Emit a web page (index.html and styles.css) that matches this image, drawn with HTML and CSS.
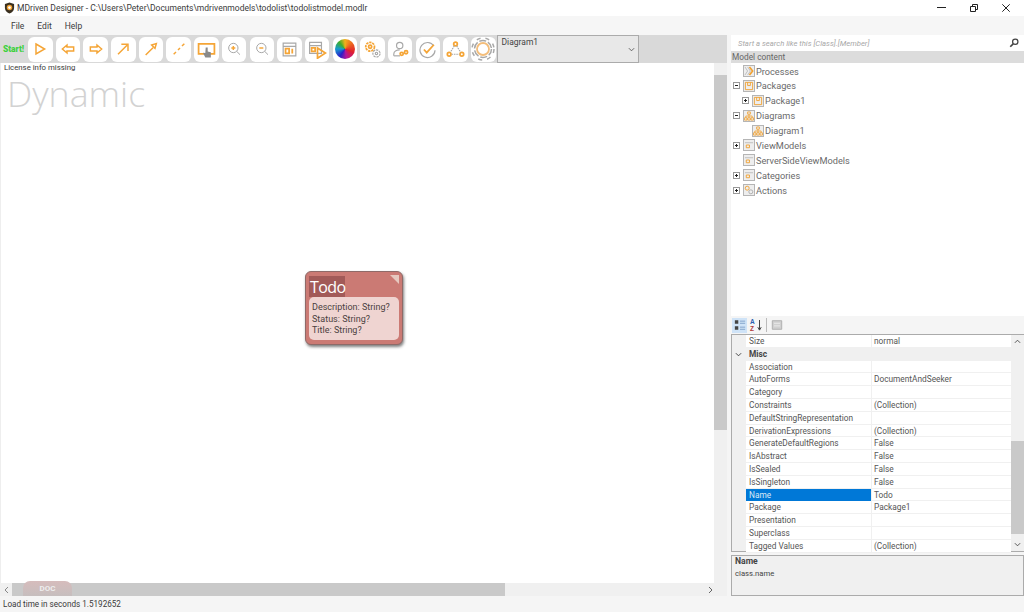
FILE: index.html
```html
<!DOCTYPE html>
<html lang="en">
<head>
<meta charset="utf-8">
<title>MDriven Designer</title>
<link rel="stylesheet" href="styles.css">
</head>
<body>
<div class="app">
  <header class="titlebar">
    <svg class="logo" viewBox="0 0 12 12"><path d="M1 1.5 6 0l5 1.500V6c0 3-2.500 5-5 6-2.500-1-5-3-5-6z" fill="#3a3020"/><circle cx="6" cy="5.500" r="3" fill="#f0a030"/><circle cx="6" cy="5.500" r="1.500" fill="#fff"/></svg>
    <span class="title">MDriven Designer - C:\Users\Peter\Documents\mdrivenmodels\todolist\todolistmodel.modlr</span>
    <div class="winctl">
      <svg class="w-min" viewBox="0 0 9 8"><path d="M0 3.500h9" stroke="#222" fill="none"/></svg>
      <svg class="w-max" viewBox="0 0 8 8"><path d="M.5 2.500h5v5h-5zM2.500 2.500v-2h5v5h-2" stroke="#222" fill="none"/></svg>
      <svg class="w-close" viewBox="0 0 8 8"><path d="M.3.300l7.400 7.400M7.700.300l-7.400 7.400" stroke="#222" fill="none"/></svg>
    </div>
  </header>
  <nav class="menubar"><span>File</span><span>Edit</span><span>Help</span></nav>
  <main class="workspace">
    <section class="designer">
      <div class="toolbar">
        <span class="start">Start!</span>
        <div class="tools">
          <button class="tool"><svg viewBox="0 0 24 24"><path d="M6 4.500 19 12 6 19.500z" class="o"/></svg></button>
          <button class="tool"><svg viewBox="0 0 24 24"><path d="M3.500 12l7-6v3h10v6h-10v3z" class="o"/></svg></button>
          <button class="tool"><svg viewBox="0 0 24 24"><path d="M20.500 12l-7-6v3h-10v6h10v3z" class="o"/></svg></button>
          <button class="tool"><svg viewBox="0 0 24 24"><path d="M4.500 20 18 6.500M9.500 5H19.500V15" class="o"/></svg></button>
          <button class="tool"><svg viewBox="0 0 24 24"><path d="M4 21 15 10M13 6l7-2-2 7z" class="o"/></svg></button>
          <button class="tool"><svg viewBox="0 0 24 24"><path d="M4 20l3.500-3.500M10.500 13.500l3-3M16.500 7.500 20 4" class="o"/></svg></button>
          <button class="tool wide"><svg viewBox="0 0 24 24"><path d="M2 5h20v12.500H2z" class="o"/><path d="M11 9.500h2.500v5l4 1v6.500h-7l-3-6 3 .5z" fill="#8a8a8a"/></svg></button>
          <button class="tool"><svg viewBox="0 0 24 24"><circle cx="11" cy="10.500" r="7" class="g"/><path d="M16 15.500l5 5" class="g"/><path d="M8 10.500h6M11 7.500v6" class="o"/></svg></button>
          <button class="tool"><svg viewBox="0 0 24 24"><circle cx="11" cy="10.500" r="7" class="g"/><path d="M16 15.500l5 5" class="g"/><path d="M8 10.500h6" class="o"/></svg></button>
          <button class="tool wide"><svg viewBox="0 0 24 24"><path d="M4 4h16v16H4zM4 8h16" class="g"/><path d="M7 11h4.500v6H7zM15.500 11v6" class="o"/></svg></button>
          <button class="tool wide"><svg viewBox="0 0 24 24"><path d="M2 3h15v14H2zM2 7h15" class="g"/><path d="M4.500 10h4.500v4.500H4.500z" class="o"/><path d="M12 10l10 6.500-10 6.500z" class="o"/></svg></button>
          <button class="tool full"><i class="wheel"></i></button>
          <button class="tool wide"><svg viewBox="0 0 24 24"><circle cx="9" cy="8.500" r="5.500" class="ow"/><circle cx="9" cy="8.500" r="2" class="o"/><circle cx="17" cy="17" r="4.500" class="gw"/><circle cx="17" cy="17" r="1.500" class="g"/></svg></button>
          <button class="tool wide"><svg viewBox="0 0 24 24"><circle cx="11" cy="7" r="4" class="g"/><path d="M3.500 20v-2c0-3.500 3.500-5.500 7.500-5.500" class="g"/><path d="M3.500 20h8" class="g"/><circle cx="13.500" cy="17.500" r="2" class="o"/><circle cx="19" cy="15.500" r="2" class="o"/></svg></button>
          <button class="tool wide"><svg viewBox="0 0 24 24"><path d="M20 7.500A9.500 9.500 0 1 0 21.500 13" class="g"/><path d="M7.500 12l3.500 4 9-10" class="o"/></svg></button>
          <button class="tool wide"><svg viewBox="0 0 24 24"><circle cx="12" cy="5" r="2.300" class="o"/><circle cx="4" cy="18" r="2.300" class="o"/><circle cx="20" cy="18" r="2.300" class="o"/><path d="M10.500 7.500 5.500 15.500M13.500 7.500 18.500 15.500M7 18h10" class="g" stroke-dasharray="2 1"/></svg></button>
          <button class="tool full"><svg viewBox="0 0 24 24"><circle cx="12" cy="12" r="6" class="ring"/><circle cx="12" cy="12" r="8.500" class="g" stroke-dasharray="7 2"/><circle cx="12" cy="12" r="11" class="g" stroke-dasharray="4 5"/></svg></button>
        </div>
        <div class="combo"><span>Diagram1</span><svg viewBox="0 0 8 5"><path d="M1 1l3 3 3-3" fill="none" stroke="#555"/></svg></div>
      </div>
      <div class="canvas-row">
        <div class="canvas">
          <p class="license">License info missing</p>
          <p class="watermark">Dynamic</p>
          <article class="node">
            <i class="fold"></i>
            <h2><span>Todo</span></h2>
            <ul>
              <li>Description: String?</li>
              <li>Status: String?</li>
              <li>Title: String?</li>
            </ul>
          </article>
        </div>
        <div class="vscroll"><i class="thumb"></i></div>
      </div>
      <div class="hscroll">
        <svg class="harrow" viewBox="0 0 5 8"><path d="M4 1 1 4l3 3" fill="none" stroke="#888"/></svg>
        <div class="hthumb"><span class="doc">DOC</span></div>
        <svg class="harrow end" viewBox="0 0 5 8"><path d="M1 1l3 3-3 3" fill="none" stroke="#666"/></svg>
      </div>
    </section>
    <aside class="side">
      <div class="search"><em>Start a search like this [Class].[Member]</em>
        <svg viewBox="0 0 12 12"><circle cx="7.500" cy="4.500" r="3.200" fill="none" stroke="#444" stroke-width="1.500"/><path d="M5 7 1.500 10.500" stroke="#444" stroke-width="2"/></svg>
      </div>
      <div class="content-head">Model content</div>
      <div class="tree">
        <div class="trow l0"><i class="exp none"></i><span class="ti"><svg viewBox="0 0 11 11"><path d="M1 1l3 4.500L1 10M4 1l3 4.500L4 10" fill="none" stroke="#bbb"/><path d="M6 1l3.500 4.500L6 10" fill="none" stroke="#f0a030" stroke-width="1.800"/></svg></span>Processes</div>
        <div class="trow l0"><i class="exp minus"></i><span class="ti"><svg viewBox="0 0 11 11"><path d="M1.500 1.500h8v8h-8zM4 1.500v3.500h3V1.500" fill="none" stroke="#f0a030"/></svg></span>Packages</div>
        <div class="trow l1"><i class="exp plus"></i><span class="ti"><svg viewBox="0 0 11 11"><path d="M1.500 1.500h8v8h-8zM4 1.500v3.500h3V1.500" fill="none" stroke="#f0a030"/></svg></span>Package1</div>
        <div class="trow l0"><i class="exp minus"></i><span class="ti"><svg viewBox="0 0 11 11"><path d="M4 1h3v2.500H4zM.5 7.500h2.800V10H.5zM4.100 7.500h2.800V10H4.100zM7.700 7.500h2.800V10H7.700zM2 7.500V5.500h7v2M5.500 3.500v4" fill="none" stroke="#f0a030" stroke-width=".9"/></svg></span>Diagrams</div>
        <div class="trow l1"><i class="exp none"></i><span class="ti"><svg viewBox="0 0 11 11"><path d="M4 1h3v2.500H4zM.5 7.500h2.800V10H.5zM4.100 7.500h2.800V10H4.100zM7.700 7.500h2.800V10H7.700zM2 7.500V5.500h7v2M5.500 3.500v4" fill="none" stroke="#f0a030" stroke-width=".9"/></svg></span>Diagram1</div>
        <div class="trow l0"><i class="exp plus"></i><span class="ti"><svg viewBox="0 0 11 11"><path d="M1 3h9" stroke="#bbb"/><path d="M2.500 5.500h3.500v3H2.500z" fill="none" stroke="#f0a030"/></svg></span>ViewModels</div>
        <div class="trow l0"><i class="exp none"></i><span class="ti"><svg viewBox="0 0 11 11"><path d="M1 3h9" stroke="#bbb"/><path d="M2.500 5.500h3.500v3H2.500z" fill="none" stroke="#f0a030"/></svg></span>ServerSideViewModels</div>
        <div class="trow l0"><i class="exp plus"></i><span class="ti"><svg viewBox="0 0 11 11"><path d="M1 3h9" stroke="#bbb"/><path d="M2.500 5.500h3.500v3H2.500z" fill="none" stroke="#f0a030"/></svg></span>Categories</div>
        <div class="trow l0"><i class="exp plus"></i><span class="ti"><svg viewBox="0 0 11 11"><circle cx="3.500" cy="3.500" r="2.200" fill="none" stroke="#f0a030"/><circle cx="7.500" cy="7.500" r="2.200" fill="none" stroke="#aaa"/></svg></span>Actions</div>
      </div>
      <div class="prop-tools">
        <span class="pt on"><svg viewBox="0 0 14 14"><path d="M1 1.500h4v4H1zM1 8.500h4v4H1z" fill="#444"/><path d="M7 2.500h6M7 5h6M7 9.500h6M7 12h6" stroke="#7a9cc4"/></svg></span>
        <span class="pt az"><b>A</b><b>Z</b><svg viewBox="0 0 5 13"><path d="M2.500 0v11M.5 8.500l2 3.500 2-3.500" fill="none" stroke="#222"/></svg></span>
        <i class="sep"></i>
        <span class="pt"><svg viewBox="0 0 14 14"><path d="M1.500 2h11v10h-11z" fill="#d0d0d0" stroke="#aaa"/><path d="M3.500 5h7M3.500 8h7" stroke="#eee"/></svg></span>
      </div>
      <div class="grid-wrap">
        <div class="pgrid">
          <div class="prow"><span class="pn">Size</span><span class="pv">normal</span></div>
          <div class="prow cat"><svg viewBox="0 0 8 5"><path d="M1 1l3 3 3-3" fill="none" stroke="#333"/></svg><span class="pn">Misc</span></div>
          <div class="prow"><span class="pn">Association</span><span class="pv"></span></div>
          <div class="prow"><span class="pn">AutoForms</span><span class="pv">DocumentAndSeeker</span></div>
          <div class="prow"><span class="pn">Category</span><span class="pv"></span></div>
          <div class="prow"><span class="pn">Constraints</span><span class="pv">(Collection)</span></div>
          <div class="prow"><span class="pn">DefaultStringRepresentation</span><span class="pv"></span></div>
          <div class="prow"><span class="pn">DerivationExpressions</span><span class="pv">(Collection)</span></div>
          <div class="prow"><span class="pn">GenerateDefaultRegions</span><span class="pv">False</span></div>
          <div class="prow"><span class="pn">IsAbstract</span><span class="pv">False</span></div>
          <div class="prow"><span class="pn">IsSealed</span><span class="pv">False</span></div>
          <div class="prow"><span class="pn">IsSingleton</span><span class="pv">False</span></div>
          <div class="prow sel"><span class="pn">Name</span><span class="pv">Todo</span></div>
          <div class="prow"><span class="pn">Package</span><span class="pv">Package1</span></div>
          <div class="prow"><span class="pn">Presentation</span><span class="pv"></span></div>
          <div class="prow"><span class="pn">Superclass</span><span class="pv"></span></div>
          <div class="prow"><span class="pn">Tagged Values</span><span class="pv">(Collection)</span></div>
        </div>
        <div class="gscroll">
          <svg viewBox="0 0 8 5"><path d="M1 4l3-3 3 3" fill="none" stroke="#444"/></svg>
          <i class="gthumb"></i>
          <svg viewBox="0 0 8 5"><path d="M1 1l3 3 3-3" fill="none" stroke="#444"/></svg>
        </div>
      </div>
      <div class="help"><strong>Name</strong><span>class.name</span></div>
    </aside>
  </main>
  <footer class="status">Load time in seconds 1.5192652</footer>
</div>
</body>
</html>
```
FILE: styles.css
```css
* { box-sizing: border-box; }
html, body { margin: 0; height: 100%; }
body { font-family: Roboto, "Open Sans", sans-serif; font-size: 8.300px; color: #333; background: #f5f5f5; overflow: hidden; }
.app { width: 1024px; height: 612px; display: flex; flex-direction: column; }

.titlebar { height: 16px; background: #fff; display: flex; align-items: center; padding-left: 4px; flex: none; }
.logo { width: 11px; height: 12px; margin-right: 2px; }
.title { font-size: 8.500px; color: #3a3a3a; white-space: nowrap; }
.winctl { margin-left: auto; display: flex; gap: 24px; padding-right: 14px; }
.winctl svg { height: 8px; display: block; }
.w-min { width: 9px; }
.w-max, .w-close { width: 8px; }

.menubar { height: 19px; background: #f6f6f6; display: flex; align-items: center; padding-left: 11px; gap: 13px; flex: none; font-size: 8.500px; color: #3a3a3a; }

.workspace { flex: 1; display: flex; min-height: 0; }
.designer { width: 727px; display: flex; flex-direction: column; flex: none; }
.toolbar { height: 28px; background: #d9d9d9; display: flex; align-items: center; flex: none; }
.start { width: 28px; padding-left: 3px; font-size: 8.400px; font-weight: 900; color: #3ed13e; white-space: nowrap; }
.tools { display: flex; gap: 3.200px; }
.tool { width: 24.500px; height: 25px; padding: 0; border: 0; border-radius: 6px; background: #fff; display: flex; align-items: center; justify-content: center; }
.tool svg { width: 16px; height: 16px; display: block; }
.tool.wide svg { width: 19px; height: 19px; }
.tool.full svg { width: 24px; height: 24px; }
.wheel { display: block; width: 20px; height: 20px; border-radius: 50%; background: conic-gradient(#f2b01c, #ea5a20 60deg, #e0202c 110deg, #b5169a 170deg, #2a1fc9 215deg, #159ad1 270deg, #3fae2a 320deg, #f2b01c); }
.o, .ow, .g, .gw, .ring { fill: none; }
.o, .ow { stroke: #f5a536; stroke-width: 2.200px; }
.ow { stroke-dasharray: 3 1; }
.g, .gw { stroke: #a8a8a8; stroke-width: 1.500px; }
.gw { stroke-dasharray: 3 1; }
.ring { stroke: #f3bd7a; stroke-width: 1.800px; }
.combo { width: 142px; height: 28px; margin-left: 1px; background: #e8e8e8; border: 1px solid #ababab; display: flex; justify-content: space-between; padding: 1px 3px 0 4px; font-size: 8.500px; color: #444; }
.combo svg { width: 7px; height: 5px; margin-top: 10px; }

.canvas-row { flex: 1; display: flex; min-height: 0; }
.canvas { flex: 1; background: #fff; position: relative; padding: 0 0 0 3px; border-left: 1px solid #eee; }
.license { margin: 0; font-size: 7.800px; line-height: 10px; color: #3a3a3a; }
.watermark { margin: 1px 0 0 3px; font-family: "Open Sans", sans-serif; font-size: 35.700px; line-height: 38px; font-weight: 300; color: #d2d2d2; }
.node { position: absolute; left: 304px; top: 208px; width: 98px; height: 74px; background: #cb7a74; border: 1px solid #8f6a68; border-radius: 6px; box-shadow: 1px 2px 3px rgba(60,60,60,.65); padding: 4px 3px 3px; }
.node h2 { margin: 0; font-family: "Open Sans", sans-serif; font-size: 16px; line-height: 23px; font-weight: 400; height: 21px; color: #fff; letter-spacing: -.6px; }
.node h2 span { display: inline-block; width: 36px; height: 21px; padding-left: 1px; background: #a25a58; }
.fold { position: absolute; right: 3px; top: 3px; width: 0; height: 0; border-top: 9px solid #e6c8bf; border-left: 9px solid transparent; }
.node ul { list-style: none; margin: 0; padding: 5px 3px 0; height: 43px; background: #efd4d1; border-radius: 5px; font-size: 9px; line-height: 11.700px; color: #4a3f3f; white-space: nowrap; }
.vscroll { width: 13px; background: #f0f0f0; flex: none; }
.thumb { display: block; margin-top: 12px; height: 355px; background: #c9c9c9; }
.hscroll { height: 13px; background: #f0f0f0; display: flex; align-items: center; flex: none; position: relative; }
.harrow { width: 5px; height: 8px; margin-left: 4px; flex: none; }
.harrow.end { margin-left: auto; margin-right: 14px; }
.hthumb { width: 493px; height: 13px; margin-left: 3px; background: #c9c9c9; }
.doc { position: absolute; left: 23px; top: -2px; width: 49px; height: 15px; border-radius: 7px 7px 0 0; background: linear-gradient(#d6bcbc, #c6bebe); color: #eee; font-weight: 700; font-size: 8px; text-align: center; line-height: 15px; }

.side { width: 293px; margin-left: 4px; display: flex; flex-direction: column; flex: none; }
.search { height: 16px; background: #fff; display: flex; align-items: center; justify-content: space-between; padding: 0 5px 0 7px; flex: none; }
.search em { font-size: 7.700px; color: #a8a8a8; }
.search svg { width: 10px; height: 10px; }
.content-head { height: 12px; background: #dcdcdc; padding-left: 1px; font-size: 8.300px; line-height: 12px; color: #666; flex: none; }
.tree { height: 253px; background: #fff; flex: none; padding-top: .6px; }
.trow { height: 14.900px; display: flex; align-items: center; font-size: 9.200px; color: #6a6a6a; white-space: nowrap; padding-left: 2px; }
.trow.l1 { padding-left: 11px; }
.exp { width: 7px; height: 7px; margin-right: 3px; border: 1px solid #999; background: #fff; position: relative; flex: none; }
.exp.none { border: 0; background: none; }
.exp.minus::before, .exp.plus::before { content: ""; position: absolute; left: 1px; top: 2px; width: 3px; height: 1px; background: #222; }
.exp.plus::after { content: ""; position: absolute; left: 2px; top: 1px; width: 1px; height: 3px; background: #222; }
.ti { width: 12px; height: 12px; margin-right: 1px; border: 1px solid #b5b5b5; background: #eee; display: flex; flex: none; }
.ti svg { width: 10px; height: 10px; display: block; }

.prop-tools { height: 18px; background: #f5f5f5; display: flex; align-items: center; padding-left: 1px; gap: 2px; flex: none; }
.pt { width: 15px; height: 15px; display: flex; align-items: center; justify-content: center; position: relative; }
.pt.on { background: #cfe3f7; }
.pt svg { width: 12px; height: 12px; }
.pt.az { font-family: "Liberation Sans", sans-serif; font-size: 6.500px; line-height: 7.500px; flex-direction: column; align-items: flex-start; padding-left: 1px; }
.pt.az b:first-child { color: #2a5fb0; }
.pt.az b:nth-child(2) { color: #b03a3a; }
.pt.az svg { position: absolute; right: 2px; top: 2px; width: 5px; height: 11px; }
.sep { width: 1px; height: 14px; background: #bbb; }

.grid-wrap { height: 218px; display: flex; flex: none; background: #f0f0f0; border-top: 1px solid #ababab; border-bottom: 1px solid #ababab; border-left: 1px solid #ababab; }
.pgrid { width: 279px; display: grid; grid-auto-rows: 12.800px; align-content: start; }
.prow { display: grid; grid-template-columns: 125px 140px; margin-left: 14px; background: #fff; border-bottom: 1px solid #f0f0f0; font-size: 8.300px; line-height: 12px; color: #555; white-space: nowrap; }
.pn { padding-left: 3px; }
.pv { border-left: 1px solid #f0f0f0; padding-left: 2px; }
.prow.cat { position: relative; background: #f0f0f0; display: block; }
.prow.cat svg { position: absolute; left: -11px; top: 4px; width: 7px; height: 5px; }
.prow.cat .pn { font-weight: 700; color: #444; }
.prow.sel .pn { background: #0078d7; color: #dce9f5; }
.gscroll { flex: 1; display: flex; flex-direction: column; align-items: center; padding: 4px 0; }
.gscroll svg { width: 7px; height: 5px; flex: none; }
.gthumb { display: block; margin: auto 0 8px; width: 100%; height: 93px; background: #c9c9c9; }

.help { height: 41px; margin-top: 3px; background: #f0f0f0; border: 1px solid #ababab; padding: 0 4px 0 3px; display: flex; flex-direction: column; font-size: 7.700px; color: #444; flex: none; }
.help strong { font-weight: 700; font-size: 8.600px; line-height: 11px; }
.help span { line-height: 13px; }

.status { height: 16px; background: #f5f5f5; padding-left: 3px; font-size: 8.150px; line-height: 16px; color: #3a3a3a; flex: none; }
```
